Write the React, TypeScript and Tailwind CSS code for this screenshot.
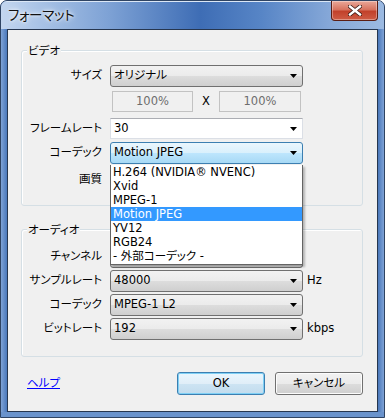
import React from "react";

const FONT = "[font-family:'DejaVu_Sans','Noto_Sans_CJK_JP',sans-serif] [font-feature-settings:'palt']";

function Arrow() {
  return (
    <svg width="7" height="4" viewBox="0 0 7 4" className="shrink-0">
      <path d="M0 0h7L3.5 4z" fill="#000" />
    </svg>
  );
}

type ComboKind = "normal" | "focus" | "edit";

function Combo({ value, kind = "normal", h = "h-[22px]" }: { value: string; kind?: ComboKind; h?: string }) {
  const skin =
    kind === "focus"
      ? "rounded-[3px] border border-[#3c7fb1] bg-[linear-gradient(#eaf6fd_0%,#d9f0fc_50%,#bee6fd_50%,#a7d9f5_100%)]"
      : kind === "edit"
        ? "border border-[#dbdfe6] border-t-[#abadb3] bg-white"
        : "rounded-[3px] border border-[#707070] bg-[linear-gradient(#f2f2f2_0%,#ebebeb_50%,#dddddd_50%,#cfcfcf_100%)]";
  return (
    <div className={`flex w-[193px] items-center justify-between pl-[3px] pr-[5px] ${h} ${skin}`}>
      <span className="leading-none">{value}</span>
      <Arrow />
    </div>
  );
}

function Row({ label, children }: { label: string; children?: React.ReactNode }) {
  return (
    <div className="flex items-center gap-[8px]">
      <div className="w-[80px] shrink-0 text-right leading-none">{label}</div>
      {children}
    </div>
  );
}

function Group({ title, className, children }: { title: string; className: string; children: React.ReactNode }) {
  return (
    <div className={`relative ml-[13px] w-[342px] rounded-[3px] border border-[#d5dfe5] shadow-[inset_1px_1px_0_#ffffff] ${className}`}>
      <span className="absolute left-[5px] top-[-8px] bg-[#f0f0f0] px-[1px] leading-[16px]">{title}</span>
      {children}
    </div>
  );
}

const codecs = ["H.264 (NVIDIA® NVENC)", "Xvid", "MPEG-1", "Motion JPEG", "YV12", "RGB24", "- 外部コーデック -"];

export default function App() {
  return (
    <div className={`relative flex h-[418px] w-[385px] flex-col overflow-hidden rounded-t-[7px] border border-[#2f4463] bg-[#5b87c6] text-[11.5px] text-black ${FONT}`}>
      {/* title bar */}
      <div className="flex h-[28px] shrink-0 items-start justify-between border-t border-[#dbe7f6] bg-[linear-gradient(90deg,#c3d6ef_0%,#a9c3e6_10%,#7ea2d5_28%,#3e6db5_52%,#5785c6_68%,#86a8d8_86%,#9cbae2_100%)]">
        <span className="ml-[7px] mt-[5px] text-[13.5px] leading-[16px] tracking-[-0.3px] text-[#111111] [text-shadow:0_0_6px_#ffffff,0_0_3px_#ffffff]">
          フォーマット
        </span>
        <div className="mr-[6px] mt-[-1px] flex h-[20px] w-[47px] items-center justify-center rounded-b-[4px] border border-t-0 border-[#5b1d13] bg-[linear-gradient(#e9a899_0%,#d7735f_45%,#c2412b_55%,#cf5c45_100%)] shadow-[inset_0_0_0_1px_rgba(255,255,255,0.35)]">
          <svg width="14" height="11" viewBox="0 0 14 11">
            <path d="M2 1.5 L12 9.5 M12 1.5 L2 9.5" stroke="#3b1a14" strokeWidth="4" strokeLinecap="square" />
            <path d="M2 1.5 L12 9.5 M12 1.5 L2 9.5" stroke="#ffffff" strokeWidth="2.4" strokeLinecap="square" />
          </svg>
        </div>
      </div>

      <div className="flex flex-1">
        <div className="w-[6px] shrink-0 bg-[linear-gradient(90deg,#7fa3d6,#4a78bb)]" />
        {/* client area */}
        <div className="relative flex h-[383px] w-[371px] shrink-0 flex-col border border-[#26364f] bg-[#f0f0f0]">
          {/* video */}
          <Group title="ビデオ" className="mt-[20px] h-[156px]">
            <div className="flex flex-col pt-[14px]">
              <Row label="サイズ">
                <Combo value="オリジナル" />
              </Row>
              <div className="ml-[90px] mt-[4px] flex h-[21px] items-center">
                <div className="flex h-full w-[81px] items-center justify-center border border-[#c2c2c2] bg-[#f0f0f0] text-[#6d6d6d]">100%</div>
                <div className="w-[26px] text-center">X</div>
                <div className="flex h-full w-[82px] items-center justify-center border border-[#c2c2c2] bg-[#f0f0f0] text-[#6d6d6d]">100%</div>
              </div>
              <div className="mt-[6px]">
                <Row label="フレームレート">
                  <Combo value="30" kind="edit" h="h-[21px]" />
                </Row>
              </div>
              <div className="mt-[3px]">
                <Row label="コーデック">
                  <Combo value="Motion JPEG" kind="focus" />
                </Row>
              </div>
              <div className="mt-[5px] flex h-[22px] items-center">
                <Row label="画質" />
              </div>
            </div>
          </Group>

          {/* audio */}
          <Group title="オーディオ" className="mt-[23px] h-[128px]">
            <div className="flex flex-col gap-[2px] pt-[16px]">
              <Row label="チャンネル">
                <Combo value="" />
              </Row>
              <Row label="サンプルレート">
                <Combo value="48000" />
                <span className="ml-[-4px] leading-none">Hz</span>
              </Row>
              <Row label="コーデック">
                <Combo value="MPEG-1 L2" />
              </Row>
              <Row label="ビットレート">
                <Combo value="192" />
                <span className="ml-[-4px] leading-none">kbps</span>
              </Row>
            </div>
          </Group>

          {/* buttons */}
          <div className="mt-[15px] flex items-center">
            <span className="ml-[19px] text-[#0000ff] underline">ヘルプ</span>
            <div className="ml-auto mr-[14px] flex gap-[10px]">
              <div className="flex h-[23px] w-[88px] items-center justify-center rounded-[3px] border border-[#3c7fb1] bg-[linear-gradient(#eaf6fd_0%,#e0eef8_50%,#cde4f3_50%,#c2dcee_100%)] shadow-[inset_0_0_0_1px_#7fd0f5]">
                OK
              </div>
              <div className="flex h-[23px] w-[88px] items-center justify-center rounded-[3px] border border-[#707070] bg-[linear-gradient(#f2f2f2_0%,#ebebeb_50%,#dddddd_50%,#cfcfcf_100%)] shadow-[inset_0_0_0_1px_#fcfcfc]">
                キャンセル
              </div>
            </div>
          </div>

          {/* open codec list */}
          <div className="absolute left-[102px] top-[135px] w-[193px] border border-[#646464] border-t-0 bg-white pb-[1px] shadow-[2px_2px_2px_rgba(0,0,0,0.25)]">
            {codecs.map((c) => (
              <div
                key={c}
                className={`h-[14px] pl-[2px] leading-[14px] whitespace-nowrap ${c === "Motion JPEG" ? "bg-[#3399ff] text-white" : ""}`}
              >
                {c}
              </div>
            ))}
          </div>
        </div>
        <div className="w-[6px] shrink-0 bg-[linear-gradient(90deg,#4a78bb,#7fa3d6)]" />
      </div>
      <div className="h-[5px] shrink-0 bg-[#6a93cc]" />
    </div>
  );
}
